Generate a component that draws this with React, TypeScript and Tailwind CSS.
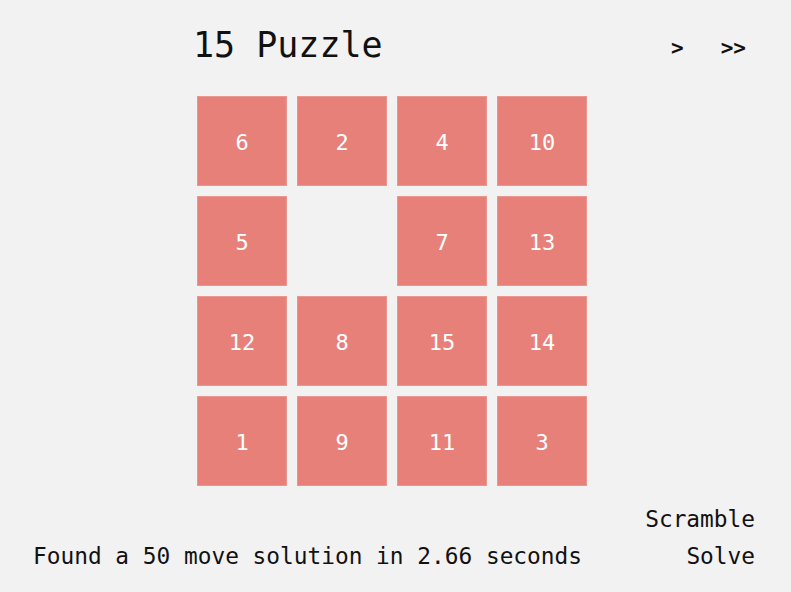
const tiles: (number | null)[] = [6, 2, 4, 10, 5, null, 7, 13, 12, 8, 15, 14, 1, 9, 11, 3]

const mono = { fontFamily: '"DejaVu Sans Mono", "Liberation Mono", monospace' }

export default function App() {
  return (
    <div className="w-[791px] h-[592px] bg-[#f2f2f2] text-[#111] overflow-hidden" style={mono}>
      <div className="h-[90px] flex items-center justify-between pl-[193px] pr-[45px]">
        <h1 className="text-[35px] leading-none">15 Puzzle</h1>
        <div className="flex items-center gap-[37px] text-[21px] leading-none font-semibold mt-[6px]">
          <button>&gt;</button>
          <button>&gt;&gt;</button>
        </div>
      </div>
      <div className="ml-[197px] mt-[6px] grid grid-cols-[repeat(4,90px)] grid-rows-[repeat(4,90px)] gap-[10px] w-fit">
        {tiles.map((t, i) =>
          t === null ? (
            <div key={i} />
          ) : (
            <div
              key={i}
              className="bg-[#e8807a] border border-[#ec9690] flex items-center justify-center pt-[3px] text-white text-[22px]"
            >
              {t}
            </div>
          )
        )}
      </div>
      <div className="mt-[14px] flex items-end justify-between pl-[33px] pr-[36px] text-[22.8px]">
        <p className="h-[37px] leading-[37px]">Found a 50 move solution in 2.66 seconds</p>
        <div className="flex flex-col items-end">
          <button className="h-[38px] leading-[38px]">Scramble</button>
          <button className="h-[37px] leading-[37px]">Solve</button>
        </div>
      </div>
    </div>
  )
}
